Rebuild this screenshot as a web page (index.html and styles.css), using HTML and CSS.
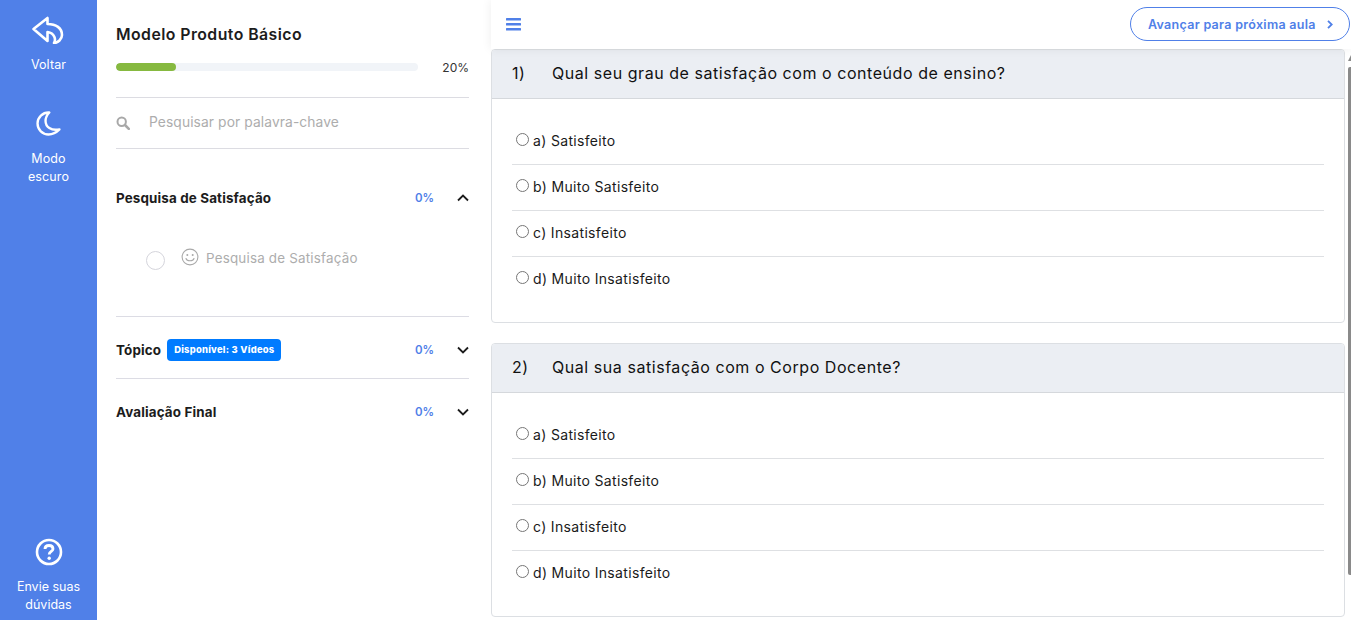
FILE: index.html
```html
<!DOCTYPE html>
<html lang="pt-BR">
<head>
<meta charset="utf-8">
<title>Modelo Produto Básico</title>
<link rel="stylesheet" href="styles.css">
</head>
<body>
<div class="app">
  <nav class="rail">
    <a class="rail-item first">
      <svg class="rail-icon" viewBox="0 0 32 28" fill="none" stroke="#fff" stroke-width="2.6" stroke-linejoin="round" stroke-linecap="round"><path d="M1.500 13 L15.500 2 V8 C24 8 30 12 30 19 C30 23 26 27 22 27 C24 24 23 17 15.500 16 V25 Z"/></svg>
      <span>Voltar</span>
    </a>
    <a class="rail-item second">
      <svg class="rail-icon" viewBox="0 0 32 32" fill="none" stroke="#fff" stroke-width="2.8" stroke-linejoin="round"><path d="M17 3 C9 2.500 3 9 3 16 C3 23.500 9 29 16 29 C21 29 25 27 29 23 C19 25 12.500 20 12.500 13 C12.500 9 14.500 5.500 17 3 Z"/></svg>
      <span>Modo<br>escuro</span>
    </a>
    <a class="rail-item help">
      <svg class="rail-icon" viewBox="0 0 28 28" fill="none" stroke="#fff"><circle cx="14" cy="14" r="12" stroke-width="2.6"/><path d="M10 11 C10 8.500 12 7.500 14 7.500 C16.500 7.500 18 9 18 11 C18 13.500 14.200 13.500 14.200 16.500" stroke-width="2.800"/><circle cx="14.200" cy="20.200" r="1.700" fill="#fff" stroke="none"/></svg>
      <span>Envie suas<br>dúvidas</span>
    </a>
  </nav>

  <aside class="side">
    <h1 class="course">Modelo Produto Básico</h1>
    <div class="progress-row">
      <div class="track"><div class="fill" style="width:20%"></div></div>
      <span class="pct">20%</span>
    </div>
    <div class="search">
      <svg class="search-icon" viewBox="0 0 14 14" fill="none" stroke="#a8a8a8"><circle cx="5.700" cy="5.700" r="4.200" stroke-width="2"/><path d="M9 9 L12.800 12.800" stroke-width="2.600" stroke-linecap="round"/></svg>
      <span>Pesquisar por palavra-chave</span>
    </div>

    <section class="module open">
      <div class="module-head">
        <span class="module-title">Pesquisa de Satisfação</span>
        <span class="module-pct">0%</span>
        <svg class="chev" viewBox="0 0 12 8" fill="none" stroke="#1c1c1c" stroke-width="1.800"><path d="M1 6.500 L6 1.500 L11 6.500"/></svg>
      </div>
      <div class="lesson">
        <span class="check"></span>
        <svg class="smile" viewBox="0 0 18 18" fill="none" stroke="#a9a9a9" stroke-width="1.100"><circle cx="9" cy="9" r="7.900"/><path d="M5 10.500 C6 13.500 12 13.500 13 10.500" stroke-linecap="round"/><circle cx="6.300" cy="7" r="1" fill="#a9a9a9" stroke="none"/><circle cx="11.700" cy="7" r="1" fill="#a9a9a9" stroke="none"/></svg>
        <span class="lesson-name">Pesquisa de Satisfação</span>
      </div>
    </section>
    <section class="module">
      <div class="module-head">
        <span class="module-title">Tópico</span>
        <span class="tag">Disponível: 3 Vídeos</span>
        <span class="module-pct">0%</span>
        <svg class="chev" viewBox="0 0 12 8" fill="none" stroke="#1c1c1c" stroke-width="1.800"><path d="M1 1.500 L6 6.500 L11 1.500"/></svg>
      </div>
    </section>
    <section class="module last">
      <div class="module-head">
        <span class="module-title">Avaliação Final</span>
        <span class="module-pct">0%</span>
        <svg class="chev" viewBox="0 0 12 8" fill="none" stroke="#1c1c1c" stroke-width="1.800"><path d="M1 1.500 L6 6.500 L11 1.500"/></svg>
      </div>
    </section>
  </aside>

  <main class="main">
    <header class="topbar">
      <svg class="burger" viewBox="0 0 15 13" fill="#5080e8"><rect y="0" width="15" height="2.500" rx=".5"/><rect y="5" width="15" height="2.500" rx=".5"/><rect y="10" width="15" height="2.500" rx=".5"/></svg>
      <a class="next">Avançar para próxima aula
        <svg viewBox="0 0 6 9" fill="none" stroke="#5080e8" stroke-width="1.800"><path d="M1 .8 L4.700 4.500 L1 8.200"/></svg>
      </a>
    </header>
    <div class="content">
      <article class="card">
        <div class="card-head"><span class="num">1)</span><span>Qual seu grau de satisfação com o conteúdo de ensino?</span></div>
        <div class="card-body">
          <label class="opt"><input type="radio" name="q1"><span>a) Satisfeito</span></label>
          <label class="opt"><input type="radio" name="q1"><span>b) Muito Satisfeito</span></label>
          <label class="opt"><input type="radio" name="q1"><span>c) Insatisfeito</span></label>
          <label class="opt"><input type="radio" name="q1"><span>d) Muito Insatisfeito</span></label>
        </div>
      </article>
      <article class="card">
        <div class="card-head"><span class="num">2)</span><span>Qual sua satisfação com o Corpo Docente?</span></div>
        <div class="card-body">
          <label class="opt"><input type="radio" name="q2"><span>a) Satisfeito</span></label>
          <label class="opt"><input type="radio" name="q2"><span>b) Muito Satisfeito</span></label>
          <label class="opt"><input type="radio" name="q2"><span>c) Insatisfeito</span></label>
          <label class="opt"><input type="radio" name="q2"><span>d) Muito Insatisfeito</span></label>
        </div>
      </article>
    </div>
    <div class="scrollbar"><div class="arrow"></div><div class="thumb"></div></div>
  </main>
</div>
</body>
</html>
```
FILE: styles.css
```css
* { box-sizing: border-box; }
html, body { margin: 0; height: 620px; overflow: hidden; }
body { font-family: Inter, "Liberation Sans", sans-serif; background: #fff; color: #1c1c1c; }
.app { display: flex; height: 620px; }

.rail { width: 97px; flex: none; background: #5080e8; color: #fff; display: flex; flex-direction: column; align-items: center; font-size: 12.5px; line-height: 18px; text-align: center; }
.rail-item { display: flex; flex-direction: column; align-items: center; }
.rail-icon { display: block; }
.rail-item.first { padding-top: 16px; letter-spacing: .1px; }
.rail-item.first .rail-icon { width: 32px; height: 28px; margin-bottom: 12px; }
.rail-item.second { padding-top: 35px; letter-spacing: .1px; }
.rail-item.second .rail-icon { width: 27px; height: 29px; margin-bottom: 12px; }
.rail-item.help { margin-top: auto; }
.rail-item.help .rail-icon { width: 28px; height: 28px; margin-bottom: 12px; }
.rail-item.help span { display: block; height: 42px; }

.side { width: 394px; flex: none; padding: 0 22px 0 19px; }
.course { font-size: 15.8px; font-weight: 600; line-height: 24px; margin: 23px 0 0; color: #1c1c1c; letter-spacing: .45px; }
.progress-row { display: flex; align-items: center; height: 20px; margin-top: 10px; }
.track { width: 302px; height: 8px; background: #f1f4f8; border-radius: 4px; overflow: hidden; }
.fill { height: 100%; background: #86b940; border-radius: 4px; }
.pct { margin-left: auto; font-size: 12px; color: #333; }
.search { display: flex; align-items: center; height: 52px; margin-top: 20px; padding-bottom: 2px; border-top: 1px solid #dcdce2; border-bottom: 1px solid #dcdce2; font-size: 13.8px; color: #adadad; letter-spacing: .1px; }
.search-icon { width: 14px; height: 14px; margin-right: 19px; margin-top: 2px; }

.module { border-bottom: 1px solid #dcdce4; }
.module.last { border-bottom: 0; }
.module-head { display: flex; align-items: center; height: 61px; padding-top: 4px; }
.module.open .module-head { height: 98px; padding-top: 0; }
.module-title { font-size: 13.4px; font-weight: 700; color: #1c1c1c; letter-spacing: .15px; }
.module-pct { margin-left: auto; font-size: 11.5px; font-weight: 600; color: #5080e8; width: 18px; margin-right: 24px; white-space: nowrap; }
.chev { width: 12px; height: 8px; flex: none; }
.tag { margin-left: 6px; background: #007bff; color: #fff; font-size: 9.4px; font-weight: 800; line-height: 22px; height: 22px; padding: 0 7px; border-radius: 4px; white-space: nowrap; letter-spacing: .25px; }
.lesson { display: flex; align-items: center; height: 70px; padding-left: 31px; margin-top: -24px; margin-bottom: 23px; }
.check { width: 19px; height: 19px; border: 1px solid #d5d5dc; border-radius: 50%; margin-right: 16px; margin-top: 4px; margin-left: -1px; }
.smile { width: 18px; height: 18px; margin-right: 7px; margin-top: -3px; }
.lesson-name { font-size: 13.4px; color: #adadad; letter-spacing: .2px; }

.main { flex: 1; position: relative; min-width: 0; }
.topbar { position: relative; z-index: 1; display: flex; align-items: center; justify-content: space-between; height: 49px; padding: 0 1px 0 15px; background: #fff; box-shadow: 0 0 10px rgba(0, 0, 0, .07); }
.burger { width: 15px; height: 13px; }
.next { display: flex; align-items: center; justify-content: space-between; width: 220px; height: 34px; margin-top: -1px; border: 1px solid #5080e8; border-radius: 17px; padding: 0 16px 0 17px; color: #5080e8; font-size: 12.5px; font-weight: 600; letter-spacing: .3px; }
.next svg { width: 6px; height: 9px; }
.content { padding-right: 6px; }
.card { border: 1px solid #dcdfe3; border-radius: 4px; margin-bottom: 20px; height: 274px; overflow: hidden; }
.card-head { display: flex; align-items: center; height: 49px; padding: 0 20px 2px; background: #ebeef3; border-bottom: 1px solid #d5d8dc; font-size: 16px; color: #111; letter-spacing: .55px; }
.num { width: 40px; }
.card-body { padding: 19px 20px 0; }
.opt { display: flex; align-items: center; height: 46px; padding: 0 0 2px 4px; font-size: 14px; color: #1a1a1a; letter-spacing: .33px; }
.opt + .opt { border-top: 1px solid #dee0e3; padding-bottom: 3px; }
.opt input { width: 13px; height: 13px; margin: 0 4px 1px 0; appearance: auto; }

.scrollbar { position: absolute; right: 0; top: 55px; width: 3.5px; bottom: 0; z-index: 2; }
.arrow { width: 0; height: 0; border-left: 3px solid transparent; border-right: 1px solid transparent; border-bottom: 6px solid #8a8a8a; margin-bottom: 6px; }
.thumb { height: 508px; background: #8a8a8a; border-radius: 2px 0 0 2px; }
```
